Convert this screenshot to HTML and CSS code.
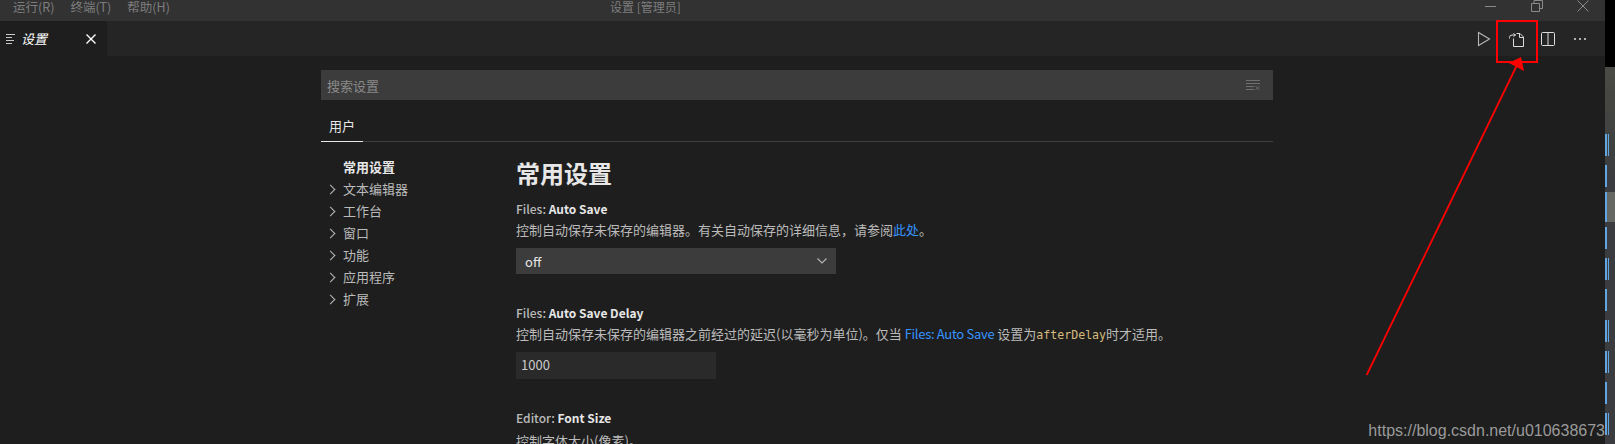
FILE: index.html
```html
<!DOCTYPE html>
<html lang="zh-CN">
<head>
    <meta charset="UTF-8">
    <title>设置 [管理员]</title>
    <link rel="stylesheet" href="styles.css">
</head>
<body>
    <div class="window">
        <!-- title bar -->
        <div class="titlebar">
            <div class="menu">
                <span>运行(R)</span>
                <span>终端(T)</span>
                <span>帮助(H)</span>
            </div>
            <div class="title">设置 [管理员]</div>
            <div class="window-controls">
                <svg width="12" height="12" viewBox="0 0 12 12"><path d="M0 6.500h11" stroke="#8a8a8a" fill="none"/></svg>
                <svg width="12" height="12" viewBox="0 0 12 12"><path d="M.5 3.500h8v8h-8zM3 3.500V.5h8.500v8H8.500" stroke="#8a8a8a" fill="none"/></svg>
                <svg width="12" height="12" viewBox="0 0 12 12"><path d="M.5.5l11 11M11.500.5l-11 11" stroke="#8a8a8a" fill="none"/></svg>
            </div>
        </div>

        <!-- tabs -->
        <div class="tabbar">
            <div class="tab">
                <svg class="tab-icon" width="10" height="12" viewBox="0 0 10 12"><path d="M0 1.500h9M0 4.500h6M0 7.500h8M0 10.500h6" stroke="#c8c8c8" stroke-width="1.200" fill="none"/></svg>
                <span class="tab-name">设置</span>
                <svg class="tab-close" width="10" height="10" viewBox="0 0 10 10"><path d="M.5.5l9 9M9.500.5l-9 9" stroke="#fff" stroke-width="1.400" fill="none"/></svg>
            </div>
            <div class="actions">
                <svg width="16" height="16" viewBox="0 0 16 16"><path d="M2.500 1.500v13l11-6.500z" stroke="#b8b8b8" stroke-width="1.100" fill="none"/></svg>
                <svg width="16" height="16" viewBox="0 0 16 16"><path d="M5.500 7.500v8h10V6l-3.500-3.500H8.500M11.500 2.500V6.500h4M1.500 7.500V6.500q0-2.500 2.500-2.500h3.500M5.500 2.500L7.500 4 5.500 5.500" stroke="#dcdcdc" fill="none"/></svg>
                <svg width="16" height="16" viewBox="0 0 16 16"><path d="M2.500 1.500h11q1 0 1 1v11q0 1-1 1h-11q-1 0-1-1v-11q0-1 1-1zM8 1.500v13" stroke="#dcdcdc" fill="none"/></svg>
                <svg width="16" height="16" viewBox="0 0 16 16"><path d="M2 8h2M7 8h2M12 8h2" stroke="#dcdcdc" stroke-width="1.600" fill="none"/></svg>
            </div>
        </div>

        <!-- settings editor -->
        <div class="editor">
            <div class="settings">
                <div class="search">
                    <span>搜索设置</span>
                    <svg width="16" height="12" viewBox="0 0 16 12"><path d="M1 1.500h14M1 4.500h14M1 7.500h8M1 10.500h8" stroke="#6f6f6f" fill="none"/><path d="M10.500 7l4 4M14.500 7l-4 4" stroke="#6f6f6f" fill="none"/></svg>
                </div>
                <div class="scope-tabs">
                    <div class="scope-tab">用户</div>
                </div>
                <div class="settings-body">
                    <ul class="toc">
                        <li class="toc-active">常用设置</li>
                        <li><i class="chev"></i>文本编辑器</li>
                        <li><i class="chev"></i>工作台</li>
                        <li><i class="chev"></i>窗口</li>
                        <li><i class="chev"></i>功能</li>
                        <li><i class="chev"></i>应用程序</li>
                        <li><i class="chev"></i>扩展</li>
                    </ul>
                    <div class="list">
                        <h2>常用设置</h2>
                        <div class="setting setting-select">
                            <div class="label">Files: <b>Auto Save</b></div>
                            <div class="desc">控制自动保存未保存的编辑器。有关自动保存的详细信息，请参阅<a>此处</a>。</div>
                            <div class="select">
                                <span>off</span>
                                <svg width="12" height="8" viewBox="0 0 12 8"><path d="M1.500 1.500L6 6l4.500-4.500" stroke="#b5b5b5" stroke-width="1.100" fill="none"/></svg>
                            </div>
                        </div>
                        <div class="setting setting-input">
                            <div class="label">Files: <b>Auto Save Delay</b></div>
                            <div class="desc">控制自动保存未保存的编辑器之前经过的延迟(以毫秒为单位)。仅当 <a class="setting-link">Files: Auto Save</a> 设置为<code>afterDelay</code>时才适用。</div>
                            <div class="input">1000</div>
                        </div>
                        <div class="setting setting-last">
                            <div class="label">Editor: <b>Font Size</b></div>
                            <div class="desc">控制字体大小(像素)。</div>
                        </div>
                    </div>
                </div>
            </div>
            <div class="watermark">https://blog.csdn.net/u010638673</div>
        </div>

        <div class="overview">
            <div class="thumb"></div>
            <i class="mark" style="top: 67px"></i><i class="mark mark-b" style="top: 67px"></i>
            <i class="mark" style="top: 98px"></i>
            <i class="mark mark-tall" style="top: 125px"></i>
            <i class="mark" style="top: 160px"></i>
            <i class="mark" style="top: 191px"></i><i class="mark mark-b" style="top: 191px"></i>
            <i class="mark" style="top: 222px"></i>
            <i class="mark" style="top: 253px"></i><i class="mark mark-b" style="top: 253px"></i>
            <i class="mark" style="top: 284px"></i><i class="mark mark-b" style="top: 284px"></i>
            <i class="mark" style="top: 315px"></i>
            <i class="mark" style="top: 346px"></i><i class="mark mark-b" style="top: 346px"></i>
        </div>

        <!-- red annotation drawn on top of the screenshot -->
        <div class="callout"></div>
        <svg class="arrow" width="1615" height="444" viewBox="0 0 1615 444">
            <path d="M1366.700 375L1517 65" stroke="#f00" stroke-width="1.800" fill="none"/>
            <path d="M1521 57L1509 63L1524 71z" fill="#f00"/>
        </svg>
    </div>
</body>
</html>
```

FILE: styles.css
```css
/* VS Code settings editor, dark theme */
* {
    box-sizing: border-box;
}

html,
body {
    height: 100%;
    margin: 0;
}

body {
    overflow: hidden;
    background-color: #1e1e1e;
    color: #ccc;
    font-family: "Noto Sans CJK SC", "Liberation Sans", sans-serif;
    font-size: 13px;
}

.window {
    position: relative;
    display: flex;
    flex-direction: column;
    width: 1615px;
    height: 444px;
}

.titlebar {
    display: flex;
    align-items: center;
    flex: none;
    height: 21px;
    padding-right: 10px;
    background-color: #323233;
    color: #7d7d7d;
    font-size: 12px;
    line-height: 14px;
}

.menu {
    display: flex;
    gap: 16px;
    width: 610px;
    padding-left: 13px;
    margin-top: -8px;
    font-size: 12.500px;
}

.title {
    width: 90px;
    margin-top: -7px;
    white-space: nowrap;
}

.window-controls {
    display: flex;
    gap: 34px;
    margin-left: auto;
    margin-top: -9px;
    margin-right: 16px;
}

.tabbar {
    display: flex;
    flex: none;
    align-items: center;
    height: 35px;
    background-color: #252526;
}

.tab {
    display: flex;
    align-items: center;
    width: 107px;
    height: 35px;
    padding-left: 6px;
    background-color: #1e1e1e;
}

.tab-name {
    margin-left: 5px;
    color: #fff;
    font-style: italic;
}

.tab-close {
    margin-left: 39px;
}

.actions {
    display: flex;
    gap: 16px;
    margin-left: auto;
    margin-right: 27px;
}

.editor {
    flex: 1;
    min-height: 0;
    overflow: hidden;
    position: relative;
    padding-left: 321px;
}

.settings {
    width: 952px;
    padding-top: 14px;
}

.search {
    display: flex;
    align-items: center;
    justify-content: space-between;
    height: 30px;
    padding: 0 12px 0 6px;
    background-color: #3c3c3c;
    color: #8a8a8a;
}

.scope-tabs {
    height: 42px;
    border-bottom: 1px solid #3f3f3f;
}

.scope-tab {
    width: 42px;
    height: 42px;
    padding-top: 17px;
    border-bottom: 1px solid #e7e7e7;
    color: #e7e7e7;
    font-size: 13px;
    line-height: 18px;
    text-align: center;
}

.settings-body {
    display: flex;
    padding-top: 15px;
}

.toc {
    flex: none;
    width: 195px;
    margin: 0;
    padding: 0 0 0 22px;
    list-style: none;
}

.toc li {
    position: relative;
    height: 22px;
    line-height: 20px;
    color: #bbb;
}

.toc .toc-active {
    color: #e7e7e7;
    font-weight: 700;
}

.chev {
    position: absolute;
    top: 7px;
    left: -16px;
    width: 7px;
    height: 7px;
    border-top: 1px solid #bbb;
    border-right: 1px solid #bbb;
    transform: rotate(45deg);
}

.list h2 {
    margin: 0;
    height: 35px;
    color: #e7e7e7;
    font-size: 24px;
    font-weight: 700;
    line-height: 32px;
}

.setting-select {
    height: 112px;
    padding-top: 8px;
}

.setting-input {
    height: 105px;
}

.label {
    height: 23px;
    color: #bbb;
    font-size: 12px;
    font-weight: 500;
    line-height: 18px;
}

.label b {
    color: #e7e7e7;
    font-weight: 700;
}

.setting-last .label {
    height: 25px;
}

.desc {
    height: 25px;
    color: #bbb;
    font-size: 13px;
    line-height: 14px;
    white-space: nowrap;
}

.desc a {
    color: #3794ff;
}

.desc .setting-link {
    letter-spacing: -0.300px;
}

.desc code {
    color: #d7ba7d;
    font-family: "DejaVu Sans Mono", monospace;
    font-size: 11.600px;
}

.select {
    display: flex;
    align-items: center;
    justify-content: space-between;
    width: 320px;
    height: 26px;
    padding: 0 8px 0 9px;
    background-color: #3c3c3c;
    color: #e7e7e7;
}

.input {
    width: 200px;
    height: 27px;
    padding-left: 5px;
    background-color: #2a2a2a;
    color: #ccc;
    line-height: 26px;
}

.watermark {
    position: absolute;
    right: 10px;
    bottom: 3px;
    color: #9a9a9a;
    font-family: "Liberation Sans", sans-serif;
    font-size: 16px;
    line-height: 20px;
}

.overview {
    position: absolute;
    top: 67px;
    right: 0;
    bottom: 0;
    width: 10px;
    background: linear-gradient(#4a4b44, #3a3c3f 30%);
}

.titlebar::after {
    content: "";
    position: absolute;
    top: 0;
    right: 0;
    width: 10px;
    height: 67px;
    background-color: #000;
}

.thumb {
    position: absolute;
    top: 125px;
    left: 2px;
    width: 8px;
    height: 30px;
    background-color: #666864;
}

.mark {
    position: absolute;
    left: 0;
    width: 2px;
    height: 22px;
    background-color: #61a5e2;
}

.mark-b {
    left: 3px;
    width: 1px;
}

.mark-tall {
    height: 30px;
}

.callout {
    position: absolute;
    top: 20px;
    left: 1496px;
    width: 42px;
    height: 43px;
    border: 2px solid #f00;
}

.arrow {
    position: absolute;
    top: 0;
    left: 0;
    pointer-events: none;
}
```
